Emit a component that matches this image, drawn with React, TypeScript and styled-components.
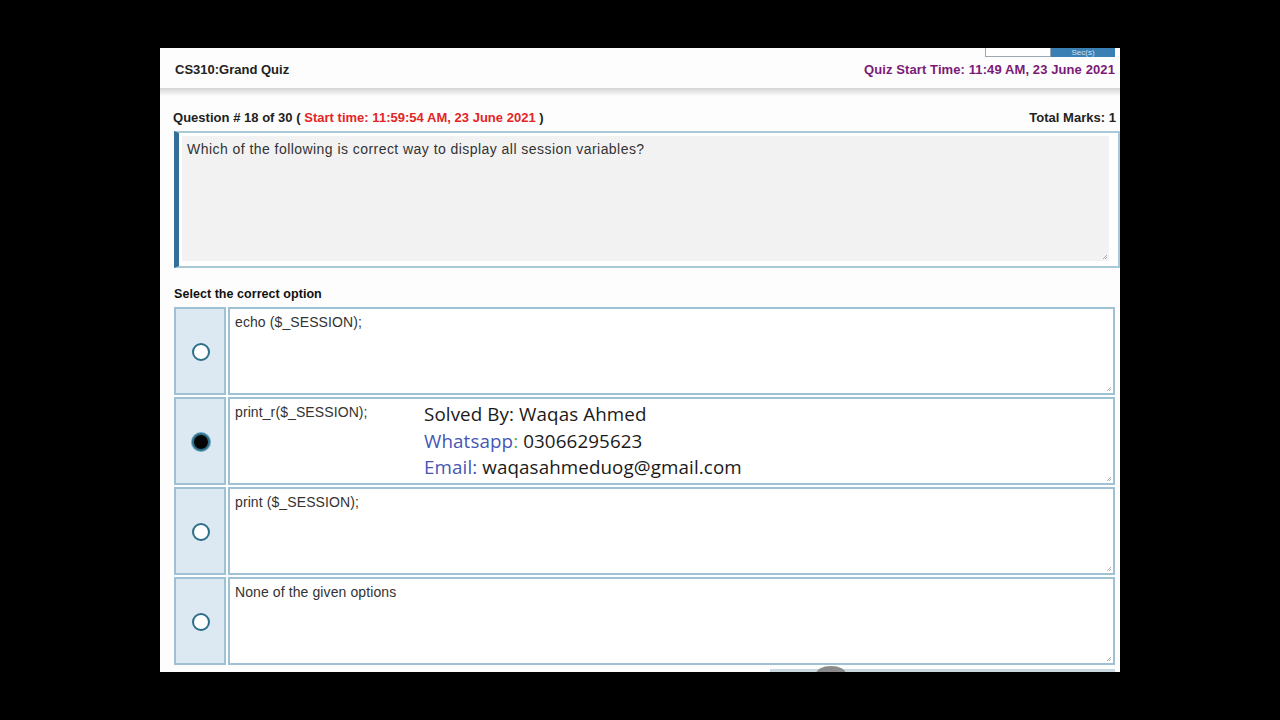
import React from 'react';
import styled, { createGlobalStyle } from 'styled-components';

const GlobalStyle = createGlobalStyle`
  html, body {
    margin: 0;
    padding: 0;
    background: #000;
  }
`;

const Screen = styled.div`
  width: 1280px;
  height: 720px;
  background: #000;
  padding: 48px 0 0 160px;
  box-sizing: border-box;
`;

const Panel = styled.div`
  position: relative;
  width: 960px;
  height: 624px;
  background: #fdfdfd;
  overflow: hidden;
  font-family: 'Liberation Sans', sans-serif;
  color: #222;
`;

const TopStrip = styled.div`
  display: flex;
  justify-content: flex-end;
  height: 9px;
  padding-right: 5px;
`;

const TimerBox = styled.div`
  display: flex;
  height: 9px;
`;

const TimerInput = styled.div`
  width: 64px;
  border: 1px solid #9aa9b4;
  border-top: none;
  background: #fff;
`;

const TimerButton = styled.div`
  width: 64px;
  background: #3b80b4;
  color: #cfe0ee;
  font-size: 8px;
  line-height: 9px;
  text-align: center;
  overflow: hidden;
`;

const HeaderRow = styled.div`
  display: flex;
  justify-content: space-between;
  align-items: center;
  height: 24px;
  padding: 0 5px 0 15px;
  font-size: 13px;
  font-weight: 700;
  letter-spacing: 0;
`;

const Purple = styled.span`
  color: #7a1a78;
  letter-spacing: 0.1px;
`;

const ShadowBar = styled.div`
  height: 8px;
  margin-top: 7px;
  background: linear-gradient(#d4d4d4, #ececec 60%, #fdfdfd);
`;

const MetaRow = styled.div`
  display: flex;
  justify-content: space-between;
  align-items: center;
  height: 20px;
  margin-top: 11px;
  padding: 0 4px 0 13px;
  font-size: 13px;
  font-weight: 700;
  letter-spacing: 0.02px;
  white-space: nowrap;
`;

const Red = styled.span`
  color: #e32525;
`;

const QuestionBox = styled.div`
  margin: 4px 0 0 14px;
  height: 137px;
  box-sizing: border-box;
  border: 2px solid #a9c8d8;
  border-left: 5px solid #336f96;
  background: #fff;
  padding: 3px 9px 5px 3px;
  display: flex;
`;

const QuestionArea = styled.div`
  position: relative;
  flex: 1;
  background: #f2f2f2;
  padding: 5px 5px;
  font-size: 14px;
  letter-spacing: 0.45px;
  color: #333;
`;

const Grip = styled.svg`
  position: absolute;
  right: 1px;
  bottom: 1px;
`;

const SelectLabel = styled.div`
  margin: 18px 0 0 14px;
  height: 16px;
  line-height: 16px;
  font-size: 12.5px;
  font-weight: 700;
  letter-spacing: 0.05px;
  color: #111;
`;

const OptionList = styled.div`
  display: flex;
  flex-direction: column;
  gap: 2px;
  margin: 5px 5px 0 14px;
`;

const OptionRow = styled.div`
  display: flex;
  gap: 2px;
  height: 88px;
`;

const RadioCell = styled.div`
  width: 52px;
  box-sizing: border-box;
  border: 2px solid #9ec1d3;
  background: #dce8f2;
  display: flex;
  align-items: center;
  justify-content: center;
`;

const Radio = styled.div<{ $checked?: boolean }>`
  width: 18px;
  height: 18px;
  box-sizing: border-box;
  border-radius: 50%;
  border: 2.5px solid #2c6f88;
  background: ${(p) => (p.$checked ? '#050505' : '#fff')};
  box-shadow: ${(p) => (p.$checked ? '0 0 0 1px #6fa3bf' : 'none')};
  margin: 1px 0 0 2px;
`;

const AnswerCell = styled.div`
  position: relative;
  flex: 1;
  box-sizing: border-box;
  border: 2px solid #9ec1d3;
  background: #fff;
  padding: 5px 5px;
  display: flex;
  align-items: flex-start;
  font-size: 14px;
  letter-spacing: 0.1px;
  color: #333;
`;

const AnswerText = styled.div`
  width: 189px;
  flex-shrink: 0;
`;

const Watermark = styled.div`
  margin-top: -3px;
  font-family: 'Open Sans', 'Noto Sans', sans-serif;
  font-size: 18.8px;
  line-height: 26.5px;
  color: #1a1a1a;
  white-space: nowrap;
`;

const Blue = styled.span`
  color: #4656b4;
`;

const Green = styled.span`
  color: #4caf50;
`;

const CursorBlob = styled.div`
  position: absolute;
  left: 656px;
  bottom: -10px;
  width: 30px;
  height: 16px;
  border-radius: 50% 50% 0 0;
  background: #8a8a8a;
`;

const BottomLine = styled.div`
  position: absolute;
  left: 610px;
  right: 5px;
  bottom: 0;
  height: 3px;
  background: #c9d7df;
`;

function ResizeGrip() {
  return (
    <Grip width="6" height="6" viewBox="0 0 6 6">
      <path d="M5 1 L1 5 M5 3 L3 5" stroke="#9a9a9a" strokeWidth="0.8" />
    </Grip>
  );
}

const options = [
  { text: 'echo ($_SESSION);', checked: false },
  { text: 'print_r($_SESSION);', checked: true },
  { text: 'print ($_SESSION);', checked: false },
  { text: 'None of the given options', checked: false },
];

export default function App() {
  return (
    <>
      <GlobalStyle />
      <Screen>
        <Panel>
          <TopStrip>
            <TimerBox>
              <TimerInput />
              <TimerButton>Sec(s)</TimerButton>
            </TimerBox>
          </TopStrip>
          <HeaderRow>
            <span>CS310:Grand Quiz</span>
            <Purple>Quiz Start Time: 11:49 AM, 23 June 2021</Purple>
          </HeaderRow>
          <ShadowBar />
          <MetaRow>
            <span>
              Question # 18 of 30 ( <Red>Start time: 11:59:54 AM, 23 June 2021</Red> )
            </span>
            <span>Total Marks: 1</span>
          </MetaRow>
          <QuestionBox>
            <QuestionArea>
              Which of the following is correct way to display all session variables?
              <ResizeGrip />
            </QuestionArea>
          </QuestionBox>
          <SelectLabel>Select the correct option</SelectLabel>
          <OptionList>
            {options.map((o) => (
              <OptionRow key={o.text}>
                <RadioCell>
                  <Radio $checked={o.checked} />
                </RadioCell>
                <AnswerCell>
                  <AnswerText>{o.text}</AnswerText>
                  {o.checked && (
                    <Watermark>
                      Solved By: Waqas Ahmed
                      <br />
                      <Blue>Whatsapp</Blue>
                      <Green>:</Green> 03066295623
                      <br />
                      <Blue>Email:</Blue> waqasahmeduog@gmail.com
                    </Watermark>
                  )}
                  <ResizeGrip />
                </AnswerCell>
              </OptionRow>
            ))}
          </OptionList>
          <BottomLine />
          <CursorBlob />
        </Panel>
      </Screen>
    </>
  );
}
